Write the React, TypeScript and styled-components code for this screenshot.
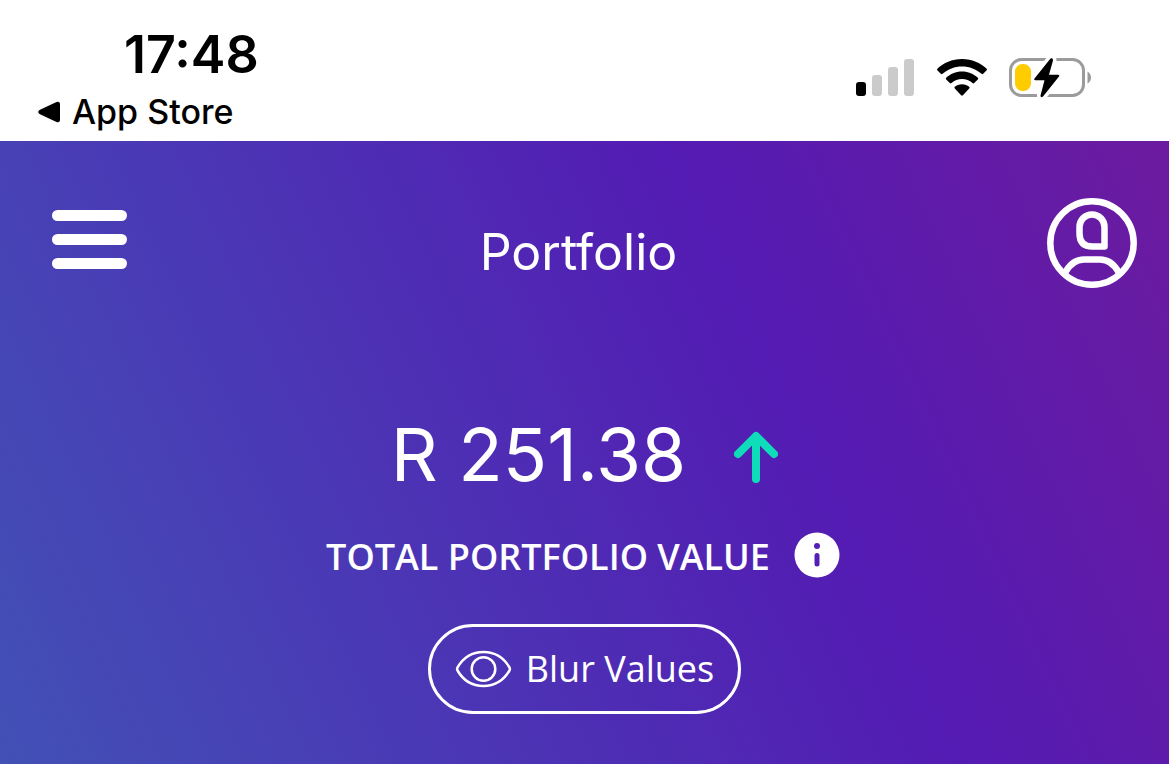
import React from "react";
import styled, { createGlobalStyle } from "styled-components";

const Global = createGlobalStyle`
  * { box-sizing: border-box; }
  body { margin: 0; background: #fff; font-family: "Open Sans", "Noto Sans", sans-serif; }
  button { border: 0; padding: 0; margin: 0; background: none; color: inherit; cursor: pointer; font: inherit; }
  svg { display: block; }
`;

const Screen = styled.div`
  display: flex;
  flex-direction: column;
  min-height: 100vh;
`;

const StatusBar = styled.header`
  display: flex;
  justify-content: space-between;
  align-items: flex-start;
  height: 141px;
  padding: 29px 77px 0 38px;
  background: #fff;
  color: #000;
  font-family: Inter, sans-serif;
`;

const StatusLeft = styled.div`
  display: flex;
  flex-direction: column;
`;

const Clock = styled.time`
  padding-left: 86px;
  font-size: 52px;
  font-weight: 600;
  line-height: 52px;
`;

const BackLink = styled.a`
  display: flex;
  align-items: center;
  gap: 12px;
  margin-top: 11px;
  color: #000;
  font-size: 34px;
  font-weight: 500;
  line-height: 40px;
  text-decoration: none;
`;

const StatusIcons = styled.div`
  display: flex;
  align-items: center;
  gap: 22px;
  padding-top: 28px;
`;

const Hero = styled.main`
  flex: 1;
  display: flex;
  flex-direction: column;
  background: linear-gradient(65deg, #4251b6 0%, #541bb3 66%, #6c1b9f 100%);
  color: #fff;
`;

const NavBar = styled.nav`
  display: grid;
  grid-template-columns: 76px 1fr 90px;
  padding: 57px 32px 0 52px;
`;

const MenuButton = styled.button`
  height: 84px;
`;

const ProfileButton = styled.button`
  height: 90px;
`;

const Title = styled.h1`
  margin: 22px 0 0;
  padding-right: 18px;
  font-family: Inter, sans-serif;
  font-size: 50px;
  font-weight: 400;
  line-height: 64px;
  text-align: center;
`;

const Summary = styled.section`
  display: flex;
  flex-direction: column;
  align-items: center;
  padding: 121px 0 48px;
`;

const AmountRow = styled.div`
  display: flex;
  align-items: center;
  gap: 48px;
`;

const Amount = styled.p`
  margin: 0;
  font-family: Inter, sans-serif;
  font-size: 73px;
  font-weight: 400;
  line-height: 92px;
`;

const ArrowUp = styled.svg`
  margin-top: 4px;
`;

const LabelRow = styled.div`
  display: flex;
  align-items: center;
  gap: 24px;
  margin-top: 30px;
  padding-right: 3px;
`;

const Label = styled.h2`
  margin: 0;
  padding-top: 4px;
  font-size: 36px;
  font-weight: 600;
  line-height: 44px;
`;

const BlurButton = styled.button`
  display: flex;
  align-items: center;
  gap: 14px;
  height: 90px;
  margin-top: 45px;
  padding: 0 24px;
  border: 3px solid #fff;
  border-radius: 45px;
  font-size: 36px;
  line-height: 48px;
`;

const SignalIcon = () => (
  <svg width="59" height="38" viewBox="0 0 59 38" aria-hidden="true">
    <rect x="0" y="23" width="10" height="14" rx="3" fill="#000" />
    <rect x="16" y="16" width="10" height="21" rx="3" fill="#cbcbcb" />
    <rect x="32" y="8" width="10" height="29" rx="3" fill="#cbcbcb" />
    <rect x="48" y="0" width="10" height="37" rx="3" fill="#cbcbcb" />
  </svg>
);

const WifiIcon = () => (
  <svg width="50" height="38" viewBox="0 0 50 38" aria-hidden="true">
    <path d="M25 0C35 0 43.5 4 49.4 9.6Q50.4 10.6 49.5 11.5L46.2 14.8Q45.4 15.6 44.5 14.8C39 10 32.5 7.4 25 7.4S11 10 5.500 14.800Q4.600 15.600 3.800 14.800L.5 11.500Q-.4 10.600.6 9.600C6.500 4 15 0 25 0Z" />
    <path d="M25 12.600C31.500 12.600 36.500 15 40.800 18.800Q41.700 19.700 40.800 20.600L37.200 24.100Q36.400 24.900 35.500 24.100C32.500 21.500 29 20 25 20S17.500 21.500 14.500 24.100Q13.600 24.900 12.800 24.100L9.200 20.600Q8.300 19.700 9.200 18.800C13.500 15 18.500 12.600 25 12.600Z" />
    <path d="M25 25.200C28 25.200 30.200 26.200 32.200 27.800Q33.100 28.600 32.200 29.500L25.900 36.200Q25 37.100 24.100 36.200L17.800 29.500Q16.900 28.600 17.800 27.800C19.800 26.200 22 25.200 25 25.200Z" />
  </svg>
);

const BatteryIcon = () => (
  <svg width="83" height="42" viewBox="0 0 83 42" aria-hidden="true">
    <rect x="1.500" y="2.500" width="73" height="36" rx="11" fill="none" stroke="#9b9b9b" strokeWidth="3" />
    <path d="M78.500 14.500Q82 16.500 82 20.500T78.500 26.500Z" fill="#9b9b9b" />
    <rect x="6" y="7" width="16" height="27" rx="7.500" fill="#fc0" />
    <path d="M41.500 1.500L25.500 21.500Q24.500 23.200 26.500 23.200H35.500L31.500 38.500Q31.500 41.500 34 39.500L50 19.500Q51 17.700 49 17.700H40L44 3.500Q44 .2 41.500 1.500Z" stroke="#fff" strokeWidth="7" strokeLinejoin="round" fill="#fff" />
    <path d="M41.500 1.500L25.500 21.500Q24.500 23.200 26.500 23.200H35.500L31.500 38.500Q31.500 41.500 34 39.500L50 19.500Q51 17.700 49 17.700H40L44 3.500Q44 .2 41.500 1.500Z" />
  </svg>
);

export default function App() {
  return (
    <Screen>
      <Global />
      <StatusBar>
        <StatusLeft>
          <Clock>17:48</Clock>
          <BackLink href="#">
            <svg width="22" height="22" viewBox="0 0 22 22" aria-hidden="true">
              <path d="M1.500 9L18.500 1Q22 .2 22 3V19Q22 21.800 18.500 21L1.500 13Q-1 11 1.500 9Z" />
            </svg>
            App Store
          </BackLink>
        </StatusLeft>
        <StatusIcons>
          <SignalIcon />
          <WifiIcon />
          <BatteryIcon />
        </StatusIcons>
      </StatusBar>
      <Hero>
        <NavBar>
          <MenuButton aria-label="Menu">
            <svg width="75" height="60" viewBox="0 0 75 60" fill="#fff">
              <rect y="0" width="75" height="11" rx="5.500" />
              <rect y="24" width="75" height="11" rx="5.500" />
              <rect y="48" width="75" height="11" rx="5.500" />
            </svg>
          </MenuButton>
          <Title>Portfolio</Title>
          <ProfileButton aria-label="Profile">
            <svg width="90" height="90" viewBox="0 0 90 90" fill="none" stroke="#fff" strokeWidth="6.500">
              <circle cx="45" cy="45" r="41.700" />
              <path d="M57.500 48.500H45.500Q32.500 48.500 32.500 35.500V29A12.500 12.500 0 0 1 57.500 29Z" strokeLinejoin="round" />
              <path d="M18.500 74C23 66 29 61.500 37 61.500H53C61 61.500 67 66 71.500 74" />
            </svg>
          </ProfileButton>
        </NavBar>
        <Summary>
          <AmountRow>
            <Amount>R 251.38</Amount>
            <ArrowUp width="44" height="52" viewBox="0 0 44 52" fill="none" stroke="#0fdcb8" strokeWidth="8" role="img" aria-label="Up">
              <path d="M22 48V6" strokeLinecap="round" />
              <path d="M4 23L22 5L40 23" strokeLinecap="round" strokeLinejoin="round" />
            </ArrowUp>
          </AmountRow>
          <LabelRow>
            <Label>TOTAL PORTFOLIO VALUE</Label>
            <button aria-label="About total portfolio value">
              <svg width="46" height="46" viewBox="0 0 46 46">
                <circle cx="23" cy="23" r="22.500" fill="#fff" />
                <circle cx="23" cy="14" r="3" fill="#541fb4" />
                <path d="M23 23.500V32" stroke="#541fb4" strokeWidth="5" strokeLinecap="round" />
              </svg>
            </button>
          </LabelRow>
          <BlurButton>
            <svg width="57" height="38" viewBox="0 0 57 38" fill="none" stroke="#fff" strokeWidth="2.500" aria-hidden="true">
              <path d="M2.500 17.500C8 8 17 2 28.500 2S49 8 54.500 17.500Q55.300 19 54.500 20.500C49 30 40 36 28.500 36S8 30 2.500 20.500Q1.700 19 2.500 17.500Z" />
              <circle cx="28.500" cy="19" r="11.800" />
            </svg>
            Blur Values
          </BlurButton>
        </Summary>
      </Hero>
    </Screen>
  );
}
